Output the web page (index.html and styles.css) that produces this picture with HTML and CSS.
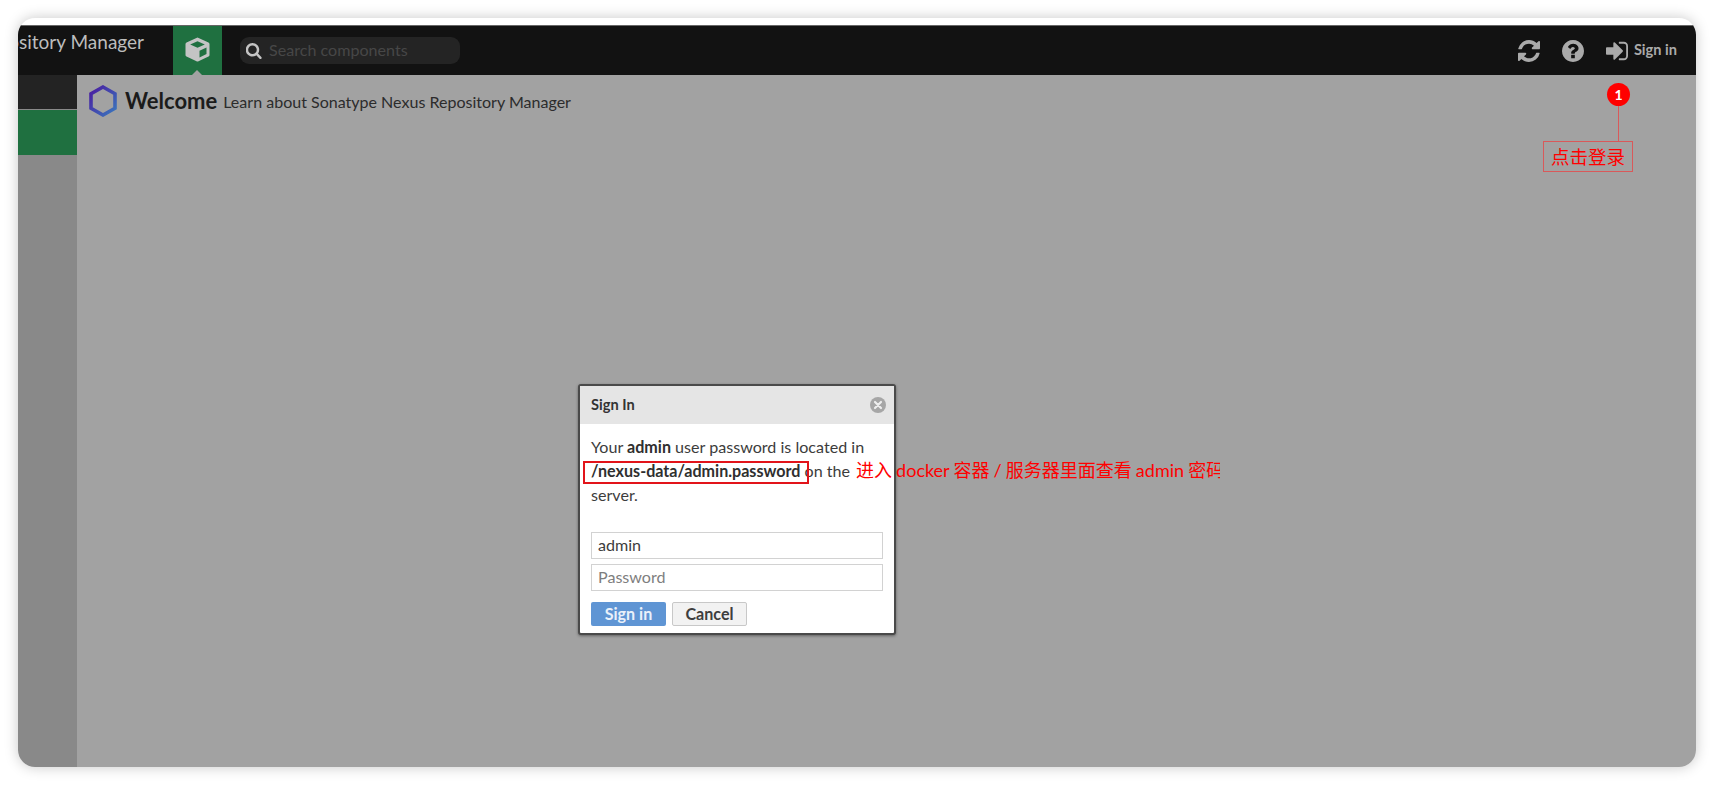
FILE: index.html
```html
<!DOCTYPE html>
<html lang="zh-CN">
<head>
<meta charset="utf-8">
<title>Sign In</title>
<link rel="stylesheet" href="styles.css">
</head>
<body>
<div class="window">
  <header class="topbar">
    <div class="brand"><span class="brand-text">Sonatype Nexus Repository Manager</span></div>
    <div class="browse-tab">
      <svg class="cube" viewBox="0 0 25 25"><path fill="#c4c4c4" d="M12.500 .5 23.500 5.500Q24.500 6 24.500 7V18Q24.500 19 23.500 19.500L13.500 24.300Q12.500 24.800 11.500 24.300L1.500 19.500Q.5 19 .5 18V7Q.5 6 1.500 5.500Z"/><path fill="#1f7040" d="M12.500 4.200 19.800 7.500 12.500 10.800 5.200 7.500Z"/><path fill="#1f7040" d="M21.500 10.500V17L14.500 20.500V13.800Z"/></svg>
      <span class="caret"></span>
    </div>
    <div class="search">
      <svg class="search-icon" viewBox="128 128 1600 1664"><path fill="#c4c4c4" d="M1216 832q0-185-131.500-316.500t-316.500-131.500-316.500 131.500-131.500 316.500 131.500 316.500 316.500 131.500 316.500-131.500 131.500-316.500zm512 832q0 52-38 90t-90 38q-54 0-90-38l-343-342q-179 124-399 124-143 0-273.500-55.500t-225-150-150-225-55.500-273.500 55.500-273.500 150-225 225-150 273.500-55.500 273.500 55.500 225 150 150 225 55.500 273.500q0 220-124 399l343 343q37 37 37 90z"/></svg>
      <span class="search-text">Search components</span>
    </div>
    <div class="actions">
      <svg class="action-icon" viewBox="128 128 1536 1536"><path d="M1639 1056q0 5-1 7-64 268-268 434.500t-478 166.500q-146 0-282.500-55t-243.500-157l-129 129q-19 19-45 19t-45-19-19-45v-448q0-26 19-45t45-19h448q26 0 45 19t19 45-19 45l-137 137q71 66 161 102t187 36q134 0 250-65t186-179q11-17 53-117 8-23 30-23h192q13 0 22.500 9.500t9.500 22.500zm25-800v448q0 26-19 45t-45 19h-448q-26 0-45-19t-19-45 19-45l138-138q-148-137-349-137-134 0-250 65t-186 179q-11 17-53 117-8 23-30 23h-199q-13 0-22.500-9.500t-9.500-22.500v-7q65-268 270-434.500t480-166.500q146 0 284 55.500t245 156.500l130-129q19-19 45-19t45 19 19 45z"/></svg>
      <svg class="action-icon" viewBox="128 128 1536 1536"><path d="M1024 1376v-192q0-14-9-23t-23-9h-192q-14 0-23 9t-9 23v192q0 14 9 23t23 9h192q14 0 23-9t9-23zm256-672q0-88-55.500-163t-138.500-116-170-41q-243 0-371 213-15 24 8 42l132 100q7 6 19 6 16 0 25-12 53-68 86-92 34-24 86-24 48 0 85.500 26t37.500 59q0 38-20 61t-68 45q-63 28-115.500 86.500t-52.500 125.500v36q0 14 9 23t23 9h192q14 0 23-9t9-23q0-19 21.500-49.500t54.500-49.500q32-18 49-28.500t46-35 44.500-48 28-60.500 12.500-81zm384 192q0 209-103 385.500t-279.500 279.500-385.500 103-385.500-103-279.500-279.500-103-385.500 103-385.500 279.500-279.500 385.500-103 385.500 103 279.500 279.500 103 385.500z"/></svg>
      <div class="signin">
        <svg class="action-icon" viewBox="128 128 1536 1536"><path d="M1312 896q0 26-19 45l-544 544q-19 19-45 19t-45-19-19-45v-288h-448q-26 0-45-19t-19-45v-384q0-26 19-45t45-19h448v-288q0-26 19-45t45-19 45 19l544 544q19 19 19 45zm352-352v704q0 119-84.500 203.500t-203.500 84.500h-320q-13 0-22.500-9.500t-9.500-22.500q0-4-1-20t-.5-26.500 3-23.500 10-19.500 20.500-6.500h320q66 0 113-47t47-113v-704q0-66-47-113t-113-47h-312l-11.500-1-11.500-3-8-5.500-7-9-2-13.500q0-4-1-20t-.5-26.500 3-23.500 10-19.500 20.500-6.500h320q119 0 203.500 84.500t84.500 203.500z"/></svg>
        <span class="signin-text">Sign in</span>
      </div>
    </div>
  </header>
  <div class="main">
    <aside class="sidebar">
      <div class="side-dark"></div>
      <div class="side-green"></div>
    </aside>
    <section class="content">
      <div class="page-title">
        <svg class="hex" viewBox="0 0 28 32"><defs><linearGradient id="hexg" x1="0" y1="0" x2="1" y2="1"><stop offset="0" stop-color="#4a1aa0"/><stop offset="1" stop-color="#3a78bd"/></linearGradient></defs><path fill="none" stroke="url(#hexg)" stroke-width="3.600" d="M14 2 26 8.800V23.200L14 30 2 23.200V8.800Z"/></svg>
        <h1 class="welcome">Welcome</h1>
        <span class="subtitle">Learn about Sonatype Nexus Repository Manager</span>
      </div>
    </section>
  </div>

  <div class="modal">
    <div class="modal-head">
      <span class="modal-title">Sign In</span>
      <svg class="close" viewBox="0 0 16 16"><circle cx="8" cy="8" r="8" fill="#a6a6a6"/><path d="M5 5 11 11M11 5 5 11" stroke="#eee" stroke-width="2.200" stroke-linecap="round"/></svg>
    </div>
    <div class="modal-body">
      <p class="message">Your <b>admin</b> user password is located in <b>/nexus-data/admin.password</b> on the server.</p>
      <div class="field">admin</div>
      <div class="field placeholder">Password</div>
      <div class="buttons">
        <span class="btn btn-primary">Sign in</span>
        <span class="btn btn-default">Cancel</span>
      </div>
    </div>
  </div>

  <span class="mark-box"></span>
  <span class="note-docker">进入 docker 容器 / 服务器里面查看 admin 密码</span>
  <span class="badge">1</span>
  <span class="badge-line"></span>
  <span class="note-login">点击登录</span>
</div>
</body>
</html>
```
FILE: styles.css
```css
* { box-sizing: border-box; }
html, body { margin: 0; height: 100%; }
body {
  background: #fff;
  padding: 18px;
  font-family: "Lato", "Noto Sans CJK SC", sans-serif;
  overflow: hidden;
}
.window {
  position: relative;
  height: 749px;
  display: flex;
  flex-direction: column;
  overflow: hidden;
  border-radius: 17px;
  background: #fff;
  padding-top: 7px;
  box-shadow: 0 0 14px rgba(0, 0, 0, .22);
}
.topbar {
  flex: none;
  height: 50px;
  display: flex;
  align-items: stretch;
  background: #121212;
  border-top: 1px solid #666;
}
.brand {
  width: 155px;
  display: flex;
  justify-content: flex-end;
  overflow: hidden;
  padding: 3px 29px 0 0;
}
.brand-text {
  flex: none;
  color: #bdbdbd;
  font-size: 19px;
  font-weight: 400;
  line-height: 26px;
  white-space: nowrap;
}
.browse-tab {
  position: relative;
  width: 49px;
  background: #1f7040;
  display: flex;
  justify-content: center;
  padding-top: 11px;
}
.cube { width: 25px; height: 25px; }
.caret {
  position: absolute;
  left: 19px;
  bottom: 0;
  border: 5px solid transparent;
  border-top: 0;
  border-bottom-color: #a2a2a2;
}
.search {
  margin: 11px 0 0 18px;
  width: 220px;
  height: 27px;
  display: flex;
  align-items: center;
  gap: 7px;
  padding-left: 6px;
  background: #242424;
  border-radius: 9px;
}
.search-icon { width: 16px; height: 16px; flex: none; }
.search-text { color: #474747; font-size: 16.100px; white-space: nowrap; padding-bottom: 2px; }
.actions {
  margin-left: auto;
  display: flex;
  align-items: center;
  gap: 22px;
  padding-right: 19px;
}
.action-icon { width: 22px; height: 22px; fill: #aaa; flex: none; }
.signin { display: flex; align-items: center; gap: 6px; }
.signin-text { color: #aaa; font-size: 14.600px; font-weight: 700; white-space: nowrap; padding-bottom: 2px; }
.main { flex: 1; display: flex; min-height: 0; }
.sidebar { width: 59px; background: #898989; flex: none; }
.side-dark { height: 34px; background: #232323; }
.side-green { height: 45px; margin-top: 1px; background: #1f7040; }
.content { flex: 1; background: #a2a2a2; padding: 10px 12px; }
.page-title { display: flex; align-items: center; height: 32px; }
.hex { width: 28px; height: 32px; flex: none; }
.welcome { margin: 0 6px 0 8px; color: #1b1b1b; font-size: 22px; font-weight: 700; line-height: 26px; }
.subtitle { color: #2c2c2c; font-size: 16.050px; white-space: nowrap; padding-top: 1px; }

.modal {
  position: absolute;
  left: 560px;
  top: 366px;
  width: 318px;
  height: 251px;
  background: #fff;
  border: 2px solid #4a4a4a;
  border-radius: 3px;
  box-shadow: 0 1px 3px rgba(0, 0, 0, .4);
}
.modal-head {
  height: 38px;
  display: flex;
  align-items: center;
  justify-content: space-between;
  padding: 0 8px 0 11px;
  background: #e5e5e5;
}
.modal-title { color: #333; font-size: 14.600px; font-weight: 700; padding-bottom: 1px; }
.close { width: 16px; height: 16px; }
.modal-body { padding: 11px 11px 0; }
.message { margin: 0 0 25px; color: #3c3c3c; font-size: 16.100px; line-height: 24px; width: 285px; }
.message b { color: #2f2f2f; }
.field {
  height: 27px;
  margin-bottom: 5px;
  padding: 0 6px;
  border: 1px solid #d2d2d2;
  color: #3c3c3c;
  font-size: 16.100px;
  line-height: 24px;
  background: #fff;
}
.placeholder { color: #7e7e7e; }
.buttons { display: flex; gap: 6px; margin-top: 11px; }
.btn {
  width: 75px;
  height: 24px;
  border-radius: 2px;
  text-align: center;
  font-size: 16.100px;
  font-weight: 700;
  line-height: 23px;
}
.btn-primary { background: #5f95d4; color: #eaf1fa; }
.btn-default { background: #f2f2f2; border: 1px solid #c8c8c8; color: #3e3e3e; line-height: 21px; }

.mark-box {
  position: absolute;
  left: 565px;
  top: 443px;
  width: 226px;
  height: 23px;
  border: 2px solid #e2141a;
}
.note-docker {
  position: absolute;
  left: 838px;
  top: 440px;
  width: 364px;
  overflow: hidden;
  color: #f00;
  font-size: 18px;
  line-height: 24px;
  word-spacing: -.5px;
  white-space: nowrap;
}
.badge {
  position: absolute;
  left: 1589px;
  top: 65px;
  width: 23px;
  height: 23px;
  border-radius: 50%;
  background: #f00;
  color: #fff;
  font-size: 14px;
  font-weight: 700;
  line-height: 23px;
  text-align: center;
}
.badge-line {
  position: absolute;
  left: 1600px;
  top: 88px;
  width: 1px;
  height: 36px;
  background: #d9595a;
}
.note-login {
  position: absolute;
  left: 1525px;
  top: 123px;
  width: 90px;
  height: 31px;
  border: 1px solid #d9595a;
  color: #f00;
  font-size: 18.500px;
  line-height: 30px;
  text-align: center;
}
```
